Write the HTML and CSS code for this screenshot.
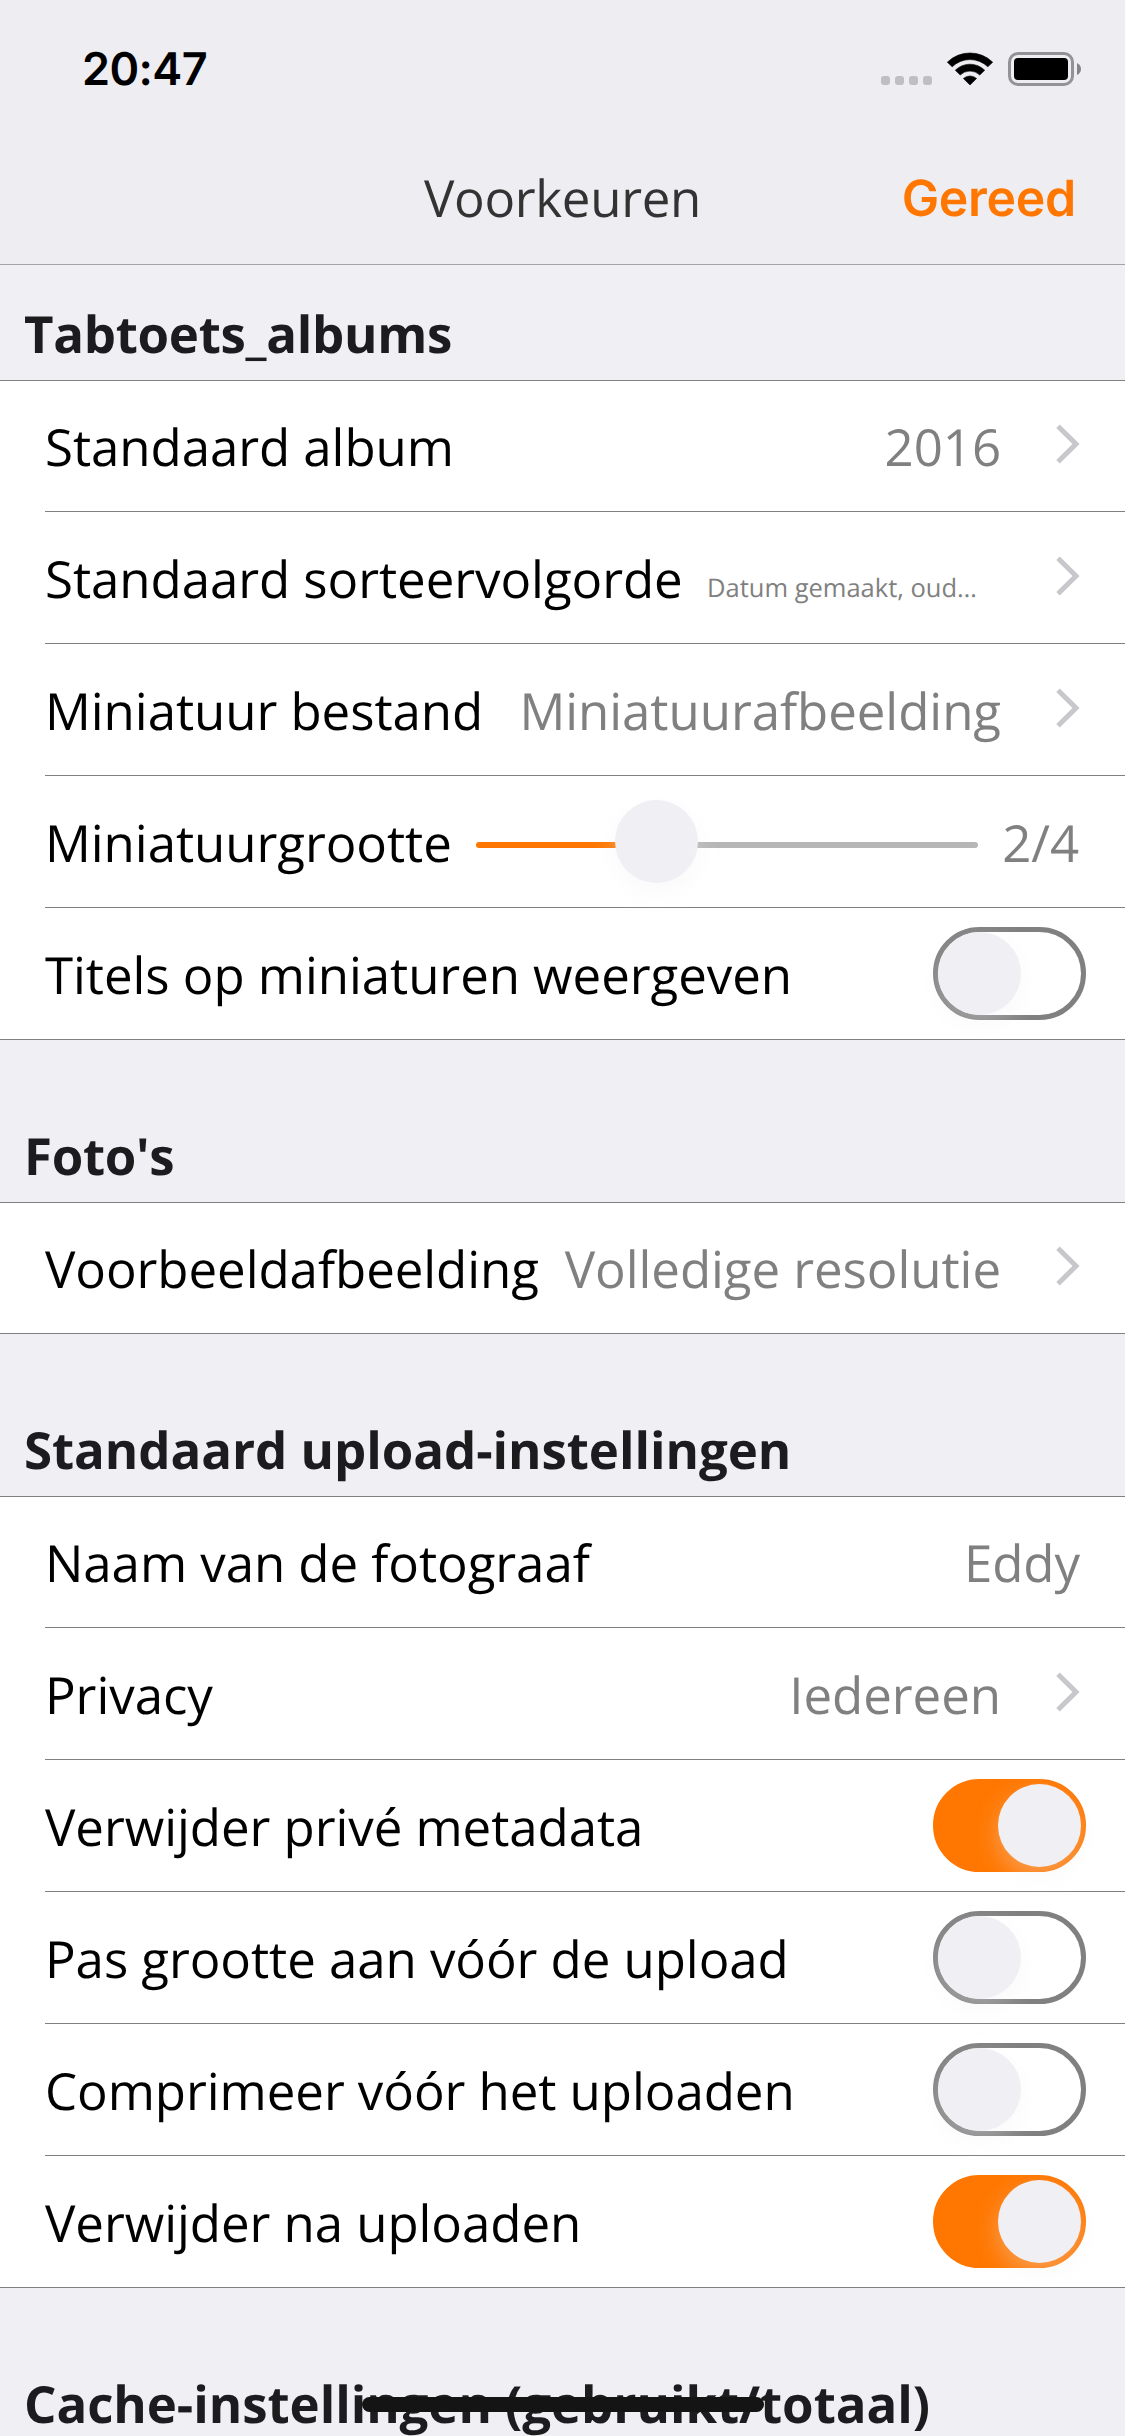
FILE: index.html
```html
<!DOCTYPE html>
<html lang="nl">
<head>
<meta charset="utf-8">
<title>Voorkeuren</title>
<link rel="stylesheet" href="styles.css">
</head>
<body>
<svg width="0" height="0" class="defs" aria-hidden="true">
  <symbol id="chevron" viewBox="0 0 24 40"><path d="M2 2.2 L20 20 L2 37.8" fill="none" stroke="#c7c7cc" stroke-width="5"/></symbol>
</svg>
<header class="top">
  <div class="status">
    <span class="time">20:47</span>
    <div class="status-icons">
      <span class="cell"><i></i><i></i><i></i><i></i></span>
      <svg class="wifi" width="46" height="34" viewBox="0 0 46 34">
        <path d="M0.3 10.2 A32.5 32.5 0 0 1 45.7 10.2 L40.8 14.8 A25.6 25.6 0 0 0 5.2 14.8 Z" stroke="#000" stroke-width="0.6" stroke-linejoin="round"/>
        <path d="M8.3 18.2 A21 21 0 0 1 37.7 18.2 L32.8 23 A14.2 14.2 0 0 0 13.2 23 Z" stroke="#000" stroke-width="0.6" stroke-linejoin="round"/>
        <path d="M16.4 26.5 A9.8 9.8 0 0 1 29.6 26.5 L23 33 Z" stroke="#000" stroke-width="0.6" stroke-linejoin="round"/>
      </svg>
      <svg class="battery" width="74" height="34" viewBox="0 0 74 34">
        <rect x="1.5" y="1.5" width="63" height="31" rx="8.5" fill="none" stroke="#939396" stroke-width="3"/>
        <rect x="6" y="6" width="54" height="22" rx="4"/>
        <path d="M69 11 Q73 13 73 17 Q73 21 69 23 Z" fill="#858588"/>
      </svg>
    </div>
  </div>
  <div class="nav">
    <h1 class="title">Voorkeuren</h1>
    <span class="done">Gereed</span>
  </div>
</header>
<main>
  <h2 class="heading first tight">Tabtoets_albums</h2>
  <section class="group">
    <div class="row"><span class="label">Standaard album</span><span class="value">2016</span><svg class="chev"><use href="#chevron"/></svg></div>
    <div class="row"><span class="label">Standaard sorteervolgorde</span><span class="value small">Datum gemaakt, oud…</span><svg class="chev"><use href="#chevron"/></svg></div>
    <div class="row"><span class="label">Miniatuur bestand</span><span class="value">Miniatuurafbeelding</span><svg class="chev"><use href="#chevron"/></svg></div>
    <div class="row"><span class="label slider-label">Miniatuurgrootte</span><div class="slider"><span class="knob thumb"></span></div><span class="value count">2/4</span></div>
    <div class="row"><span class="label">Titels op miniaturen weergeven</span><span class="switch"><span class="knob"></span></span></div>
  </section>
  <h2 class="heading tight">Foto's</h2>
  <section class="group">
    <div class="row"><span class="label">Voorbeeldafbeelding</span><span class="value">Volledige resolutie</span><svg class="chev"><use href="#chevron"/></svg></div>
  </section>
  <h2 class="heading">Standaard upload-instellingen</h2>
  <section class="group">
    <div class="row"><span class="label">Naam van de fotograaf</span><span class="value">Eddy</span></div>
    <div class="row"><span class="label">Privacy</span><span class="value">Iedereen</span><svg class="chev"><use href="#chevron"/></svg></div>
    <div class="row"><span class="label">Verwijder privé metadata</span><span class="switch on"><span class="knob"></span></span></div>
    <div class="row"><span class="label">Pas grootte aan vóór de upload</span><span class="switch"><span class="knob"></span></span></div>
    <div class="row"><span class="label">Comprimeer vóór het uploaden</span><span class="switch"><span class="knob"></span></span></div>
    <div class="row"><span class="label">Verwijder na uploaden</span><span class="switch on"><span class="knob"></span></span></div>
  </section>
  <h2 class="heading">Cache-instellingen (gebruikt/totaal)</h2>
</main>
<div class="home-indicator"></div>
</body>
</html>
```
FILE: styles.css
```css
* { box-sizing: border-box; }

body {
  margin: 0;
  position: relative;
  width: 1125px;
  height: 2436px;
  overflow: hidden;
  background: #efeff4;
  color: #000;
  font: 51px/70px "Open Sans", sans-serif;
  letter-spacing: -0.06px;
  text-rendering: geometricPrecision;
}

.defs { position: absolute; }

.top {
  height: 265px;
  background: #eeedf2;
  border-bottom: 1px solid #a3a2a7;
}

.status {
  height: 132px;
  display: flex;
  justify-content: space-between;
  padding: 0 43px 0 82px;
}

.time {
  margin-top: 41px;
  font: 600 45px/56px Inter, sans-serif;
  letter-spacing: -0.6px;
}

.status-icons {
  display: flex;
  align-items: flex-start;
  padding-top: 52px;
}

.cell { display: flex; gap: 5px; margin: 24px 15px 0 0; }
.cell i { width: 9px; height: 9px; border-radius: 3px; background: #bfbfc3; }
.wifi { margin-right: 15px; }

.nav {
  height: 130px;
  display: grid;
  grid-template-columns: 1fr auto 1fr;
  align-items: center;
  padding: 0 49px;
}

.title {
  grid-column: 2;
  margin: 0;
  font-size: 51px;
  font-weight: 400;
  letter-spacing: -0.3px;
  color: #333;
}

.done {
  justify-self: end;
  padding-top: 3px;
  font: 600 50px/70px Inter, sans-serif;
  letter-spacing: -0.3px;
  color: #ff7700;
}

.heading {
  height: 162px;
  margin: 0;
  padding: 80px 24px 12px;
  font-size: 51px;
  font-weight: 700;
  color: #1c1c1e;
  white-space: nowrap;
}

.heading.first { height: 115px; padding-top: 33px; }
.heading.tight { letter-spacing: -0.3px; }

.group {
  background: #fff;
  border-top: 1px solid #808080;
  border-bottom: 1px solid #808080;
}

.row {
  height: 130px;
  margin-left: 45px;
  padding-right: 45px;
  display: flex;
  align-items: center;
  white-space: nowrap;
}

.row + .row { height: 132px; border-top: 1px solid #808080; }

.value { margin-left: auto; color: #808080; }
.value.small { font-size: 25.5px; letter-spacing: 0; width: 294px; padding-top: 21px; }
.value.count { margin-right: 1px; }
.chev { width: 24px; height: 40px; margin: 0 0 4px 55px; }

.slider-label { width: 431px; }

.slider {
  position: relative;
  width: 502px;
  height: 6px;
  margin-top: 7px;
  border-radius: 3px;
  background: linear-gradient(90deg, #ff7700 180px, #b6b6b6 180px);
}

.knob {
  display: block;
  width: 83px;
  height: 83px;
  border-radius: 50%;
  background: #efeff4;
  box-shadow: 0 9px 24px rgba(239, 239, 244, 0.35);
}

.thumb { position: absolute; left: 139px; top: -42px; }

.switch {
  display: flex;
  width: 153px;
  height: 93px;
  margin: 0 -6px 0 auto;
  border: 5px solid #808080;
  border-radius: 47px;
}

.switch.on {
  justify-content: flex-end;
  border-color: #ff7700;
  background: #ff7700;
}

.home-indicator {
  position: absolute;
  left: 362px;
  top: 2397px;
  width: 402px;
  height: 15px;
  border-radius: 8px;
  background: #141414;
}
```
